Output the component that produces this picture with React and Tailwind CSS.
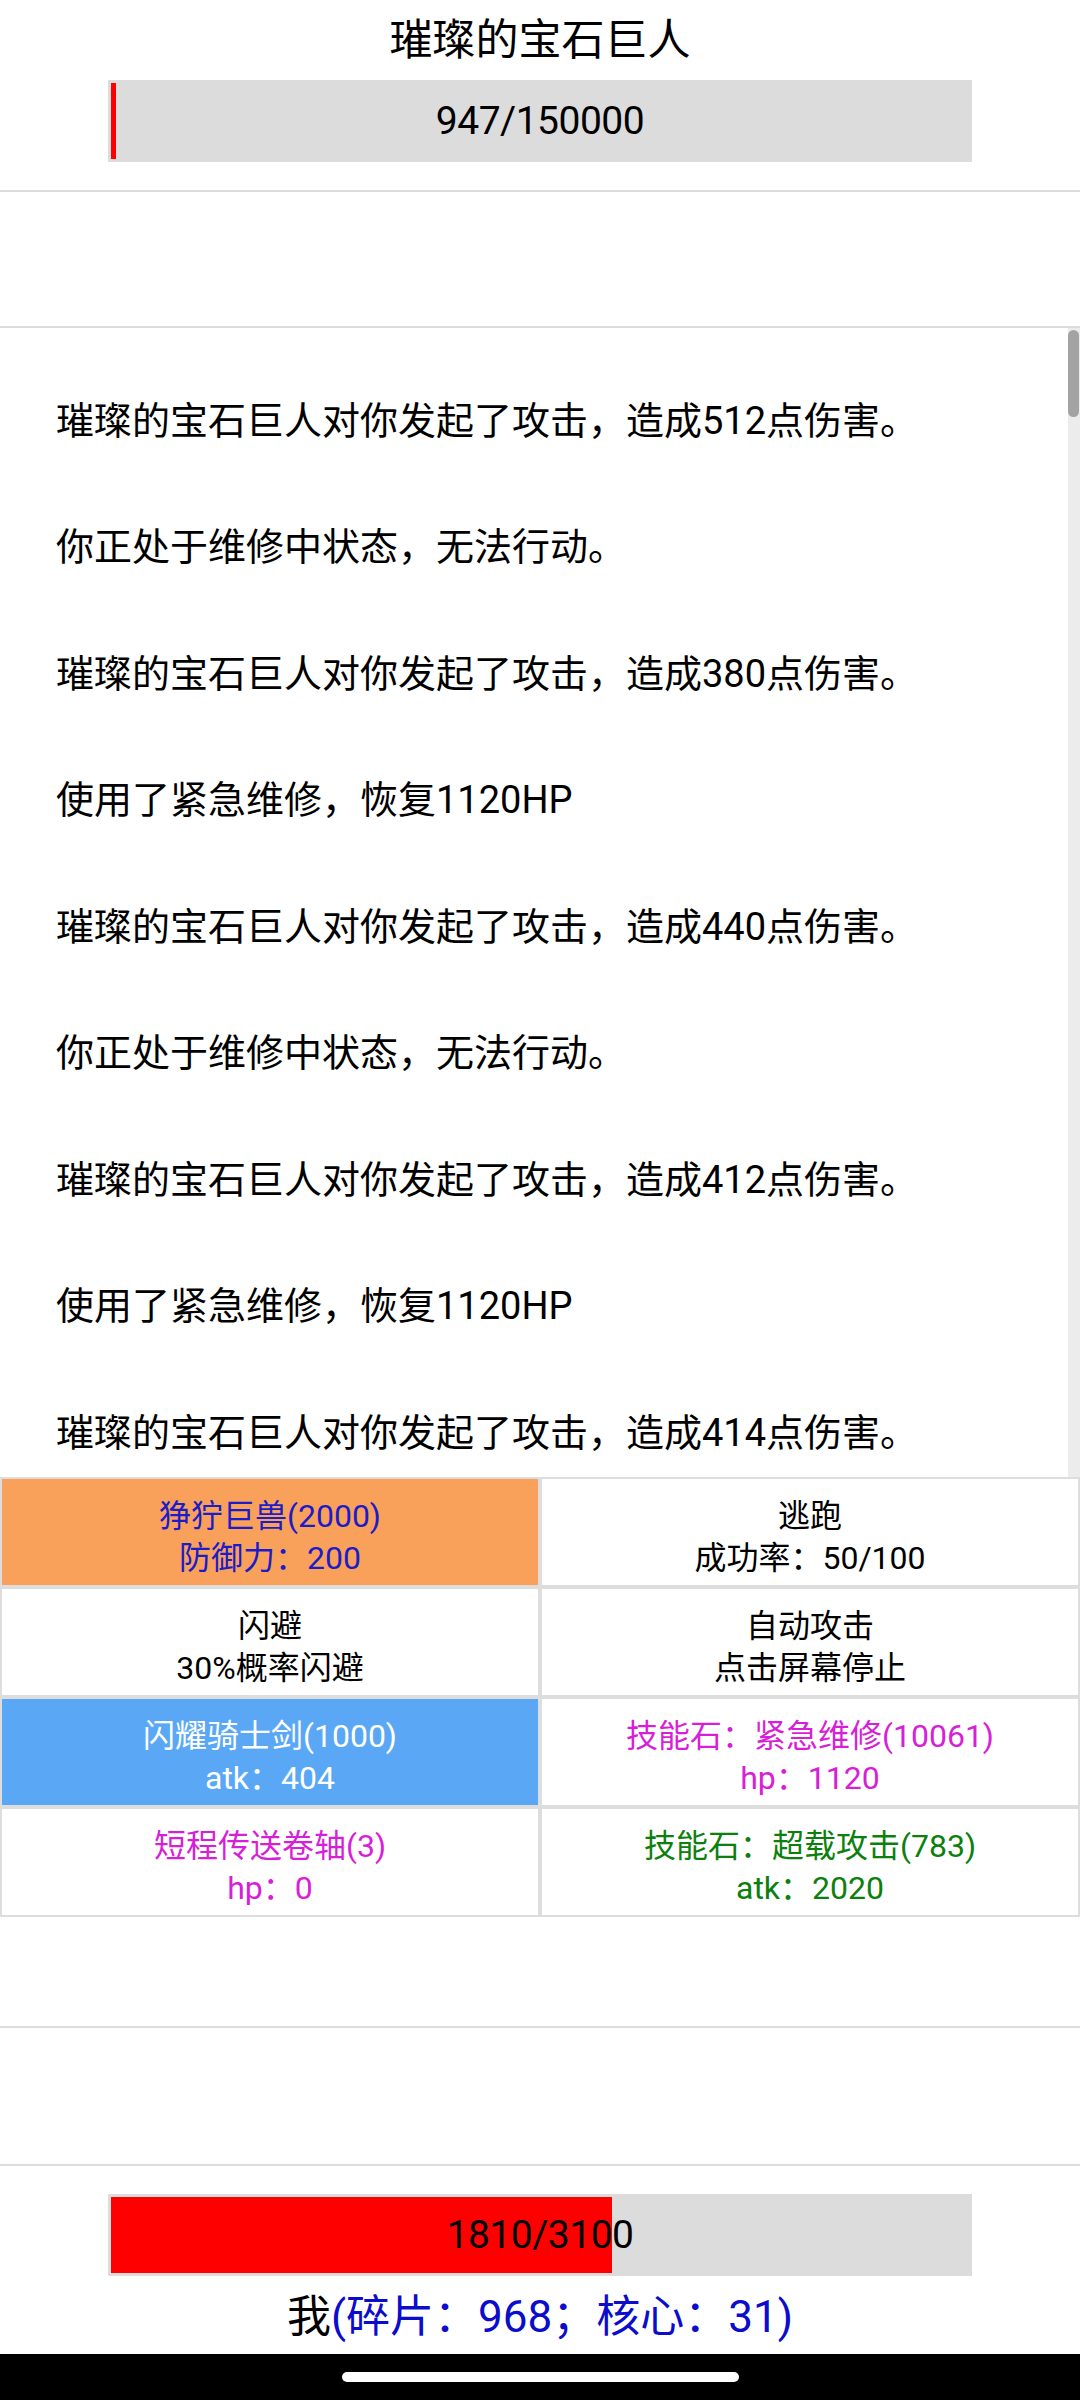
import React from "react";

const logs = [
  "璀璨的宝石巨人对你发起了攻击，造成512点伤害。",
  "你正处于维修中状态，无法行动。",
  "璀璨的宝石巨人对你发起了攻击，造成380点伤害。",
  "使用了紧急维修，恢复1120HP",
  "璀璨的宝石巨人对你发起了攻击，造成440点伤害。",
  "你正处于维修中状态，无法行动。",
  "璀璨的宝石巨人对你发起了攻击，造成412点伤害。",
  "使用了紧急维修，恢复1120HP",
  "璀璨的宝石巨人对你发起了攻击，造成414点伤害。",
  "你正处于维修中状态，无法行动。",
  "璀璨的宝石巨人对你发起了攻击，造成398点伤害。",
];

const actions = [
  { top: "狰狞巨兽(2000)", bottom: "防御力：200", cell: "bg-[#f9a15a]", text: "text-[#1c1cc8]" },
  { top: "逃跑", bottom: "成功率：50/100", cell: "bg-white", text: "text-black" },
  { top: "闪避", bottom: "30%概率闪避", cell: "bg-white", text: "text-black" },
  { top: "自动攻击", bottom: "点击屏幕停止", cell: "bg-white", text: "text-black" },
  { top: "闪耀骑士剑(1000)", bottom: "atk：404", cell: "bg-[#5aa8f5]", text: "text-white" },
  { top: "技能石：紧急维修(10061)", bottom: "hp：1120", cell: "bg-white", text: "text-[#d81fd8]" },
  { top: "短程传送卷轴(3)", bottom: "hp：0", cell: "bg-white", text: "text-[#d81fd8]" },
  { top: "技能石：超载攻击(783)", bottom: "atk：2020", cell: "bg-white", text: "text-[#0c800c]" },
];

function HpBar({ hp, max }) {
  const pct = (hp / max) * 100;
  return (
    <div className="w-[864px] mx-auto h-[82px] bg-[#dcdcdc] p-[3px] grid">
      <div className="col-start-1 row-start-1 h-full">
        <div className="h-full bg-[#ff0000]" style={{ width: `${pct}%` }} />
      </div>
      <div className="col-start-1 row-start-1 flex items-center justify-center text-[39px] tracking-[-0.5px] text-black">
        {hp}/{max}
      </div>
    </div>
  );
}

export default function App() {
  return (
    <div className="h-[2400px] w-[1080px] bg-white flex flex-col font-[Roboto,'Noto_Sans_CJK_SC',sans-serif] overflow-hidden">
      {/* Boss */}
      <div className="h-[190px] shrink-0">
        <div className="h-[80px] flex items-center justify-center text-[43px] text-black">
          璀璨的宝石巨人
        </div>
        <HpBar hp={947} max={150000} />
      </div>
      <div className="h-[2px] bg-[#dddddd] shrink-0" />
      <div className="h-[134px] shrink-0" />
      <div className="h-[2px] bg-[#dddddd] shrink-0" />

      {/* Battle log */}
      <div className="relative h-[1149px] shrink-0 overflow-hidden">
        <div className="pt-[30px] pl-[56px]">
          {logs.map((line, i) => (
            <div key={i} className="h-[126.5px] flex items-center text-[38px] text-black">
              {line}
            </div>
          ))}
        </div>
        <div className="absolute right-0 top-0 bottom-0 w-[12px] bg-[#ececec]" />
        <div className="absolute right-[1px] top-[2px] w-[11px] h-[87px] rounded-full bg-[#a3a3a3]" />
      </div>

      {/* Actions */}
      <div className="grid grid-cols-2 shrink-0">
        {actions.map((a, i) => (
          <div
            key={i}
            className={`h-[110px] pt-[10px] border-2 border-[#dddddd] flex flex-col items-center justify-center text-[32px] leading-[42px] ${a.cell} ${a.text}`}
          >
            <div>{a.top}</div>
            <div>{a.bottom}</div>
          </div>
        ))}
      </div>

      <div className="h-[109px] shrink-0" />
      <div className="h-[2px] bg-[#dddddd] shrink-0" />
      <div className="h-[136px] shrink-0" />
      <div className="h-[2px] bg-[#dddddd] shrink-0" />

      {/* Player */}
      <div className="flex-1 pt-[28px]">
        <HpBar hp={1810} max={3100} />
        <div className="mt-[19px] text-center text-[44px] leading-[44px]">
          <span className="text-black">我</span>
          <span className="text-[#0c0ccc]">(碎片：968；核心：31)</span>
        </div>
      </div>

      {/* System nav */}
      <div className="h-[46px] bg-black shrink-0 flex items-center justify-center">
        <div className="w-[397px] h-[10px] rounded-full bg-white" />
      </div>
    </div>
  );
}
